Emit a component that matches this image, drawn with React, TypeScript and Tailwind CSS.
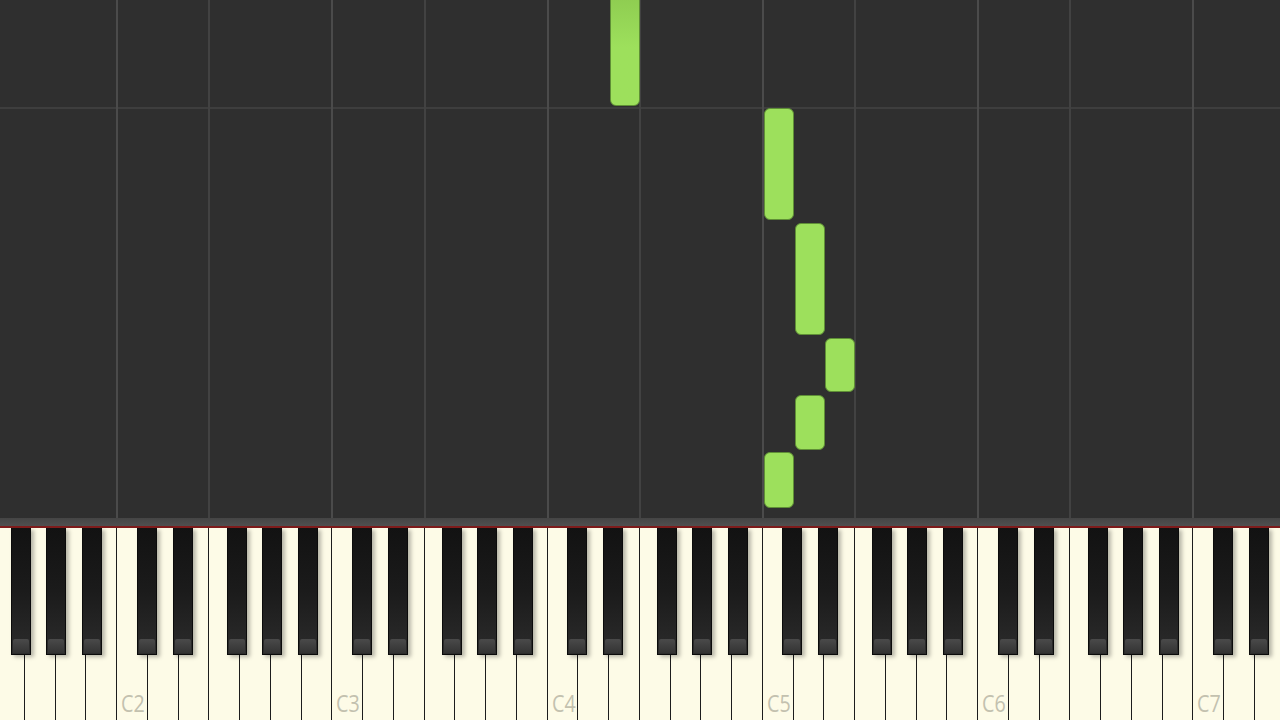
import React from 'react';

const W = 30.75;
const OCTAVE = W * 7;
const C2_X = 117;
const FIRST_KEY_X = C2_X - 4 * W; // F1, partly off-screen

// white keys from F1 onwards
const WHITE_NAMES = ['C', 'D', 'E', 'F', 'G', 'A', 'B'];
const whiteKeys = Array.from({ length: 43 }, (_, i) => {
  const idx = i + 3; // F is index 3
  const name = WHITE_NAMES[idx % 7];
  const octave = 1 + Math.floor(idx / 7);
  return { name, octave, label: name === 'C' ? `C${octave}` : '' };
});

// black key offsets inside one octave, measured from C
const BLACK_OFFSETS = [19.5, 55.5, 109.5, 144.5, 180.5];

const blackKeys: number[] = [];
for (let o = -1; o < 6; o++) {
  const base = C2_X + o * OCTAVE;
  BLACK_OFFSETS.forEach((off) => {
    const x = base + off;
    if (x > -25 && x < 1285) blackKeys.push(x);
  });
}

const gridLines: { x: number; strong: boolean }[] = [];
for (let o = 0; o < 6; o++) {
  gridLines.push({ x: C2_X + o * OCTAVE, strong: true });
  gridLines.push({ x: C2_X + o * OCTAVE + 3 * W, strong: false });
}

const lane = (octave: number, step: number) => C2_X + (octave - 2) * OCTAVE + step * W;

const notes = [
  { x: lane(4, 2), top: -12, bottom: 106, fade: true },
  { x: lane(5, 0), top: 108, bottom: 220 },
  { x: lane(5, 1), top: 223, bottom: 335 },
  { x: lane(5, 2), top: 338, bottom: 392 },
  { x: lane(5, 1), top: 395, bottom: 450 },
  { x: lane(5, 0), top: 452, bottom: 508 },
];

function NoteRoll() {
  return (
    <div className="relative h-[518px] w-full overflow-hidden bg-[#2f2f2f]">
      <div className="absolute left-0 right-0 top-[107px] h-[2px] bg-[#3e3e3e]" />
      {gridLines.map((l) => (
        <div
          key={l.x}
          className={`absolute top-0 bottom-0 w-[2px] ${l.strong ? 'bg-[#4b4b4b]' : 'bg-[#424242]'}`}
          style={{ left: l.x - 1 }}
        />
      ))}
      {notes.map((n, i) => (
        <div
          key={i}
          className={`absolute w-[30px] rounded-[6px] border border-[#5f8f36] ${
            n.fade ? 'bg-gradient-to-b from-[#8cc94f] via-[#9de05c] to-[#9de05c]' : 'bg-[#9de05c]'
          }`}
          style={{ left: n.x + 1, top: n.top, height: n.bottom - n.top }}
        />
      ))}
    </div>
  );
}

function Keyboard() {
  return (
    <div className="relative h-[192px] w-full overflow-hidden bg-[#fcfae6]">
      <div className="flex h-full" style={{ marginLeft: FIRST_KEY_X }}>
        {whiteKeys.map((k, i) => (
          <div
            key={i}
            className="relative h-full w-[30.75px] shrink-0 border-r-[1.5px] border-[#1c1c1c] bg-[#fdfbe7]"
          >
            {k.label && (
              <span className="absolute left-[4px] bottom-[4px] origin-left scale-x-[0.82] font-['Open_Sans',sans-serif] text-[24px] font-normal leading-[26px] text-[#c3c1af]">
                {k.label}
              </span>
            )}
          </div>
        ))}
      </div>
      {blackKeys.map((x) => (
        <div
          key={x}
          className="absolute top-0 flex h-[127px] w-[20px] flex-col justify-end overflow-hidden border-[1.5px] border-t-0 border-[#0b0b0b] bg-gradient-to-b from-[#121212] via-[#1b1b1b] to-[#2c2c2c] shadow-[3px_2px_4px_rgba(0,0,0,0.28)]"
          style={{ left: x }}
        >
          <div className="mx-[1px] mb-[1px] h-[14px] rounded-t-[2px] bg-gradient-to-b from-[#4a4a4a] to-[#333333]" />
        </div>
      ))}
    </div>
  );
}

export default function App() {
  return (
    <div className="flex h-[720px] w-[1280px] flex-col overflow-hidden bg-[#2f2f2f]">
      <NoteRoll />
      <div className="h-[8px] w-full bg-gradient-to-b from-[#454545] to-[#4f4f4f]" />
      <div className="h-[2px] w-full bg-[#7e1b1b]" />
      <Keyboard />
    </div>
  );
}
